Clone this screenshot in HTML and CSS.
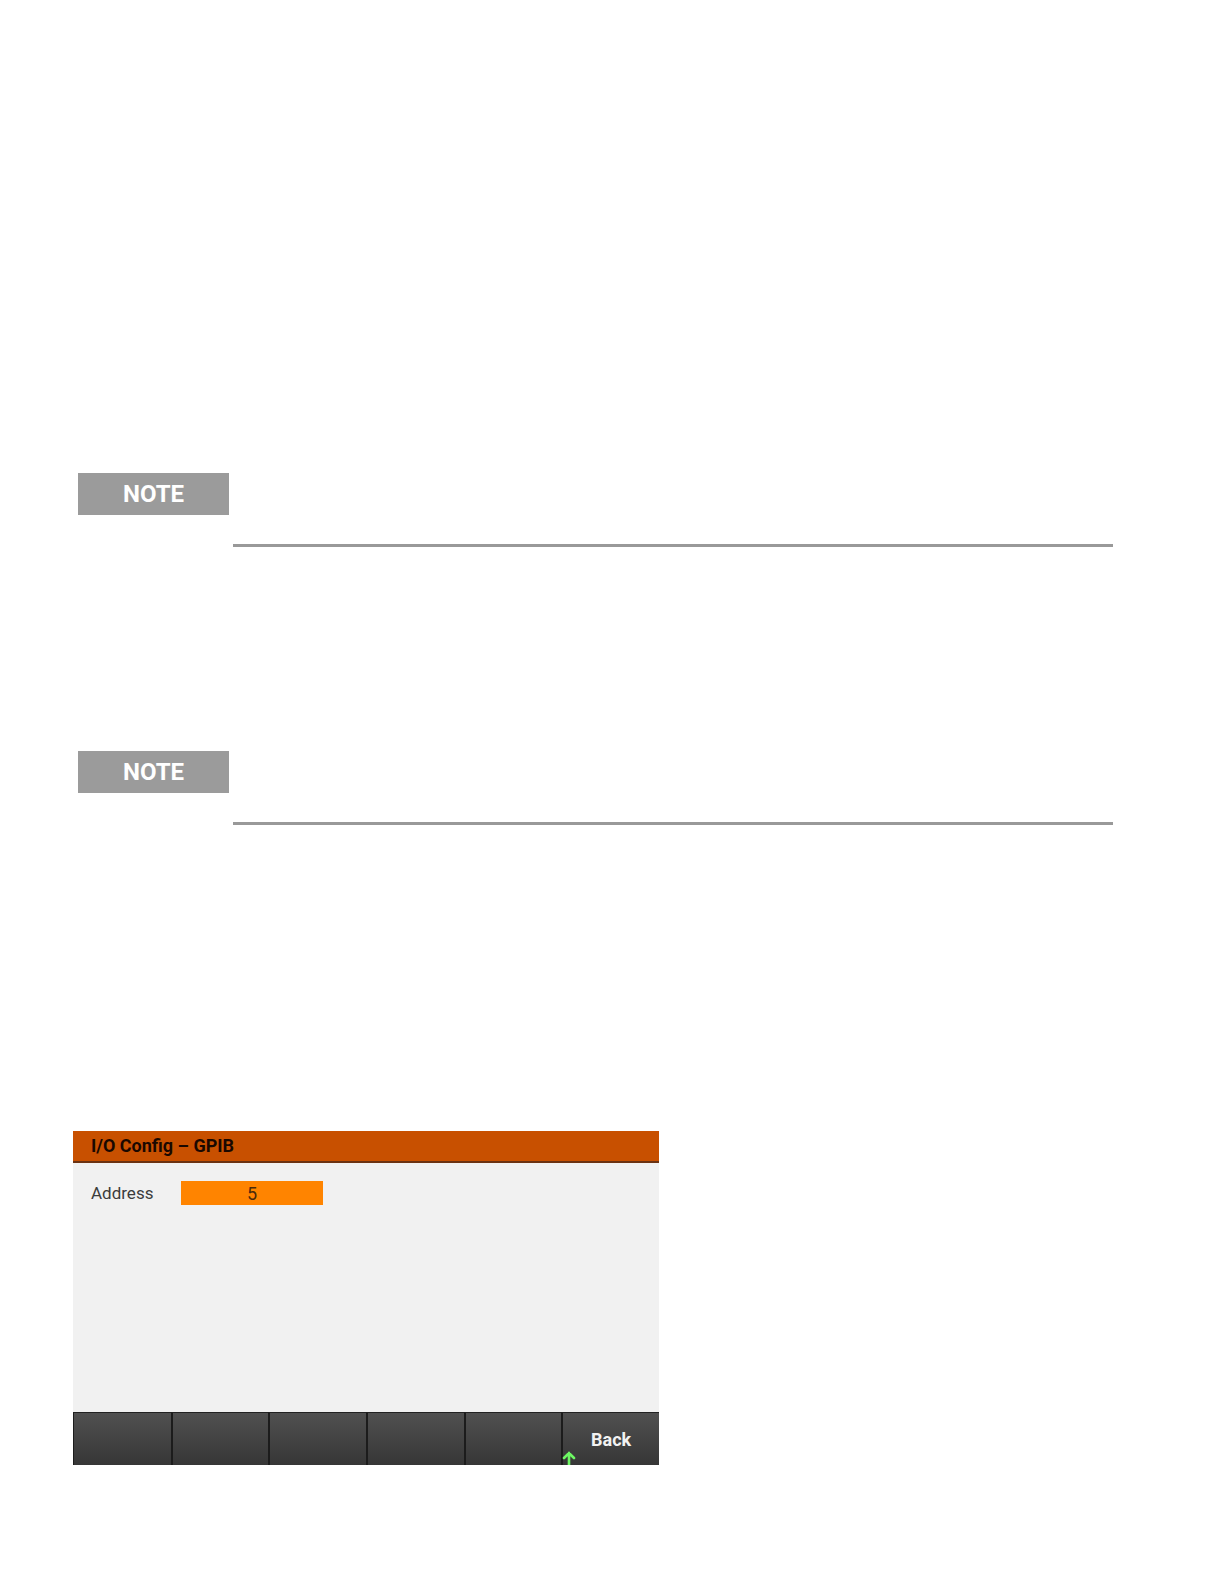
FILE: index.html
```html
<!DOCTYPE html>
<html lang="en">
<head>
  <meta charset="UTF-8" />
  <meta name="viewport" content="width=device-width, initial-scale=1.0"/>
  <title>I/O Config – GPIB</title>
  <link rel="stylesheet" href="styles.css">
</head>
<body>

<main class="page">

  <section class="note">
    <h2 class="note-label">NOTE</h2>
    <div class="note-body"></div>
  </section>

  <section class="note">
    <h2 class="note-label">NOTE</h2>
    <div class="note-body"></div>
  </section>

  <!-- Instrument front panel display -->
  <form class="screen">
    <h1 class="screen-title">I/O Config – GPIB</h1>

    <div class="screen-body">
      <div class="field">
        <label class="field-label" for="address">Address</label>
        <input class="field-input" id="address" type="text" inputmode="numeric" value="5">
      </div>
    </div>

    <div class="softkeys">
      <button class="softkey" type="button" aria-label="Softkey 1"></button>
      <button class="softkey" type="button" aria-label="Softkey 2"></button>
      <button class="softkey" type="button" aria-label="Softkey 3"></button>
      <button class="softkey" type="button" aria-label="Softkey 4"></button>
      <button class="softkey" type="button" aria-label="Softkey 5"></button>
      <button class="softkey" type="button">
        Back
        <svg class="up-arrow" width="14" height="14" viewBox="0 0 14 14" fill="none" stroke="#6df763" stroke-width="2.6" stroke-linecap="round" aria-hidden="true">
          <path d="M7 16V2M2 7l5-5 5 5"/>
        </svg>
      </button>
    </div>
  </form>

</main>

</body>
</html>
```

FILE: styles.css
```css
* {
  box-sizing: border-box;
}

body {
  margin: 0;
  background: white;
  font-family: "Liberation Sans Narrow", Roboto, sans-serif;
}

.page {
  padding: 473px 111px 119px 73px;
}

/* Notes */
.note {
  display: flex;
  gap: 4px;
  margin: 0 0 204px 5px;
}

.note-label {
  width: 151px;
  height: 42px;
  margin: 0;
  background: #9b9b9b;
  color: white;
  font-size: 24px;
  font-weight: bold;
  line-height: 42px;
  text-align: center;
}

.note-body {
  flex: 1;
  min-height: 74px;
  border-bottom: 3px solid #999999;
}

/* Front panel screen */
.screen {
  max-width: 586px;
  margin-top: 306px;
  background: #f1f1f1;
}

.screen-title {
  margin: 0;
  padding: 0 18px;
  background: #c85000;
  border-bottom: 2px solid #6b3212;
  color: #1a0800;
  font-size: 18px;
  line-height: 30px;
}

.screen-body {
  min-height: 249px;
  padding: 18px;
}

.field {
  display: flex;
  align-items: center;
}

.field-label {
  width: 90px;
  color: #3c3c3c;
  font-size: 17px;
  line-height: 24px;
}

.field-input {
  width: 142px;
  height: 24px;
  padding: 0;
  border: 0;
  background: #ff8400;
  color: #4a2a0c;
  font-family: inherit;
  font-size: 18px;
  text-align: center;
}

/* Softkeys */
.softkeys {
  display: grid;
  grid-template-columns: repeat(6, 1fr);
}

.softkey {
  position: relative;
  height: 53px;
  padding: 0;
  border: 0;
  border-top: 1px solid #222222;
  border-left: 2px solid #1c1c1c;
  background: linear-gradient(#505050, #363636);
  color: #f2f2f2;
  font-family: inherit;
  font-size: 18px;
  font-weight: bold;
}

.softkey:first-child {
  border-left-width: 1px;
}

.up-arrow {
  position: absolute;
  left: -1px;
  bottom: 0;
}
```
